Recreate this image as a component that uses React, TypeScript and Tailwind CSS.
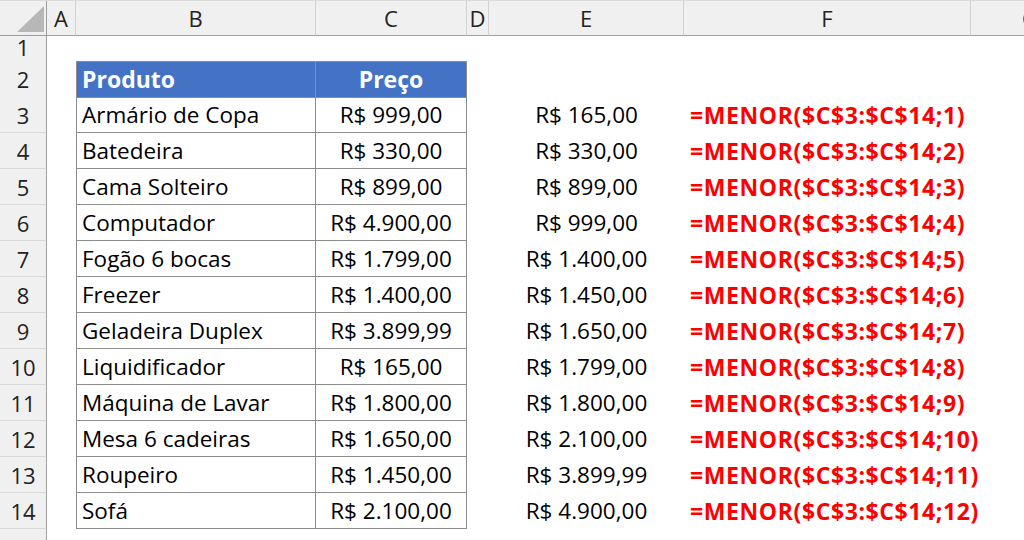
const cols = "grid grid-cols-[47px_29px_240px_151px_22px_195px_287px_1fr]";

const products: [string, string][] = [
  ["Armário de Copa", "R$ 999,00"],
  ["Batedeira", "R$ 330,00"],
  ["Cama Solteiro", "R$ 899,00"],
  ["Computador", "R$ 4.900,00"],
  ["Fogão 6 bocas", "R$ 1.799,00"],
  ["Freezer", "R$ 1.400,00"],
  ["Geladeira Duplex", "R$ 3.899,99"],
  ["Liquidificador", "R$ 165,00"],
  ["Máquina de Lavar", "R$ 1.800,00"],
  ["Mesa 6 cadeiras", "R$ 1.650,00"],
  ["Roupeiro", "R$ 1.450,00"],
  ["Sofá", "R$ 2.100,00"],
];

const sorted = [
  "R$ 165,00",
  "R$ 330,00",
  "R$ 899,00",
  "R$ 999,00",
  "R$ 1.400,00",
  "R$ 1.450,00",
  "R$ 1.650,00",
  "R$ 1.799,00",
  "R$ 1.800,00",
  "R$ 2.100,00",
  "R$ 3.899,99",
  "R$ 4.900,00",
];

const RowHead = ({ n, extra = "" }: { n: number | string; extra?: string }) => (
  <div
    className={
      "flex items-center justify-center bg-[#f0f0f0] border-r border-r-[#9e9e9e] border-b border-b-[#dadada] text-[22px] leading-none text-[#222] " +
      extra
    }
  >
    {n}
  </div>
);

const ColHead = ({ label, last }: { label: string; last?: boolean }) => (
  <div
    className={
      "flex items-center bg-[#f0f0f0] border-b border-b-[#9e9e9e] text-[22px] leading-none text-[#222] overflow-hidden " +
      (last ? "justify-start pl-[51px]" : "justify-center border-r border-r-[#d2d2d2]")
    }
  >
    {label}
  </div>
);

export default function App() {
  return (
    <div className="w-[1024px] h-[540px] overflow-hidden bg-white font-['Open_Sans','Noto_Sans',sans-serif] text-black">
      {/* column headers */}
      <div className={cols + " h-[36px] border-t border-t-[#dcdcdc]"}>
        <div className="relative bg-[#f0f0f0] border-r border-r-[#9e9e9e] border-b border-b-[#9e9e9e]">
          <div className="absolute left-[17px] top-[5px] w-0 h-0 border-l-[27px] border-l-transparent border-b-[26px] border-b-[#b7b7b7]" />
        </div>
        <ColHead label="A" />
        <ColHead label="B" />
        <ColHead label="C" />
        <ColHead label="D" />
        <ColHead label="E" />
        <ColHead label="F" />
        <ColHead label="G" last />
      </div>

      {/* row 1 */}
      <div className={cols + " h-[25px]"}>
        <RowHead n={1} extra="pb-[6px]" />
      </div>

      {/* row 2 - table header */}
      <div className={cols + " h-[36px]"}>
        <RowHead n={2} />
        <div />
        <div className="flex items-center px-[5px] bg-[#4472c4] border border-[#8c8c8c] text-white font-bold text-[23px]">
          Produto
        </div>
        <div className="flex items-center justify-center bg-[#4472c4] border-y border-r border-[#8c8c8c] text-white font-bold text-[23px]">
          Preço
        </div>
      </div>

      {products.map(([name, price], i) => (
        <div key={i} className={cols + " h-[36px]"}>
          <RowHead n={i + 3} />
          <div />
          <div className="flex items-center px-[5px] border-x border-b border-[#8c8c8c] text-[22.5px]">
            {name}
          </div>
          <div className="flex items-center justify-center border-r border-b border-[#8c8c8c] text-[22.5px]">
            {price}
          </div>
          <div />
          <div className="flex items-center justify-center text-[22.5px]">{sorted[i]}</div>
          <div className="flex items-center pl-[6px] text-[23px] tracking-[0.6px] font-bold text-[#ff0000]">
            =MENOR($C$3:$C$14;{i + 1})
          </div>
        </div>
      ))}

      {/* row 15, cut off */}
      <div className={cols + " h-[12px]"}>
        <RowHead n="" />
      </div>
    </div>
  );
}
